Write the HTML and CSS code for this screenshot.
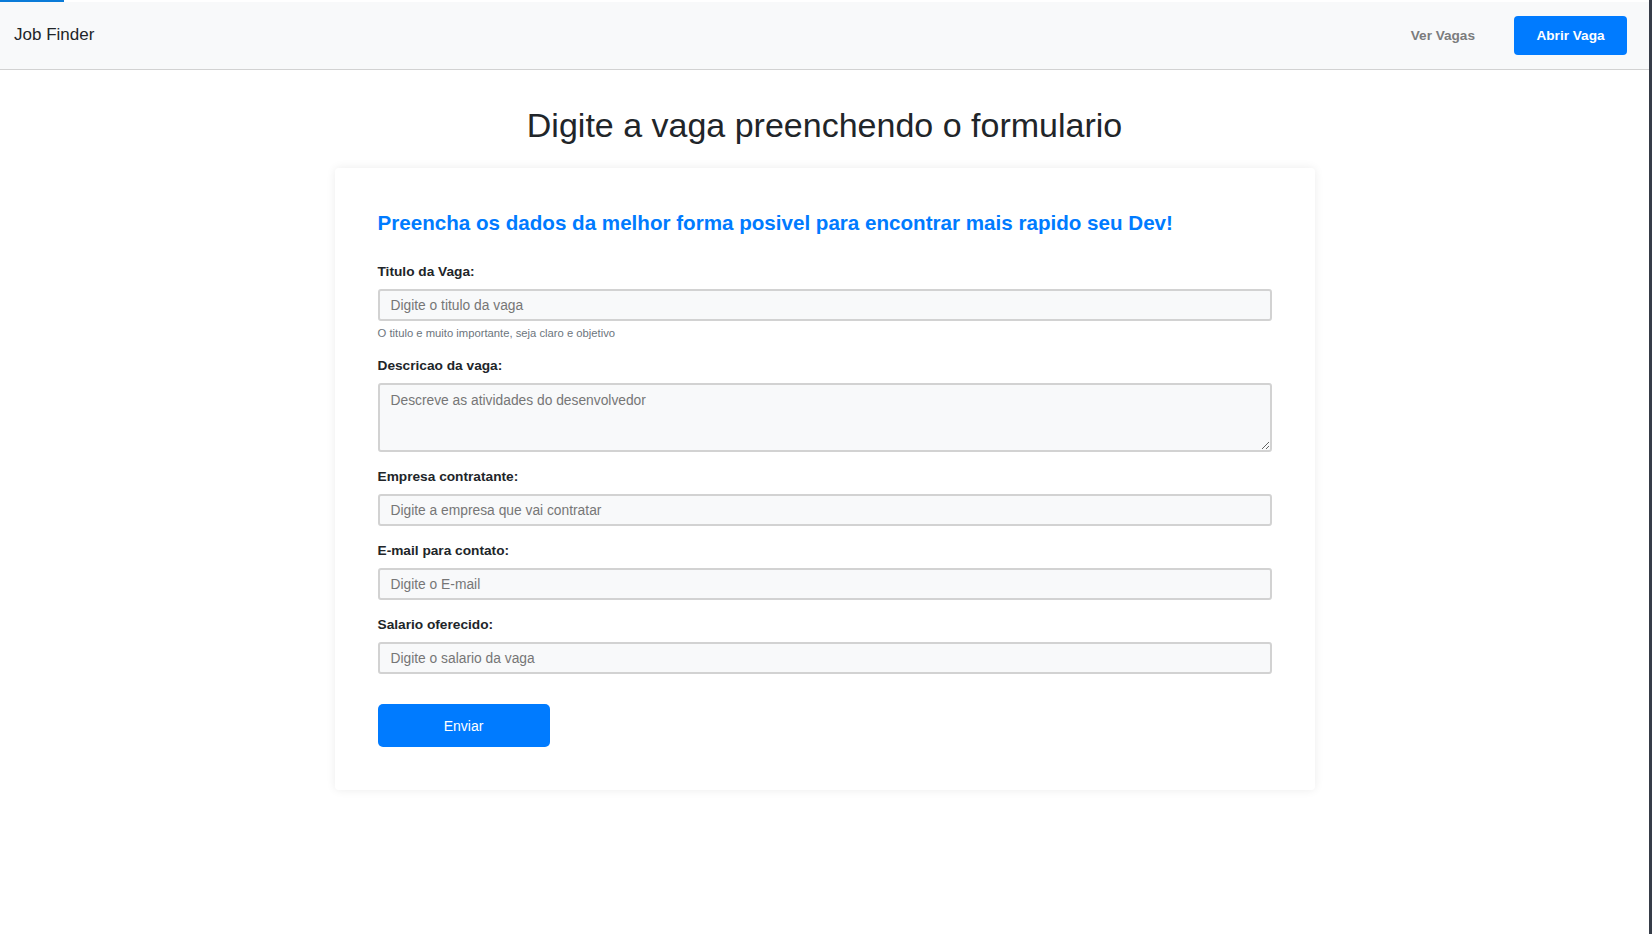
FILE: index.html
```html
<!DOCTYPE html>
<html lang="pt-BR">
<head>
<meta charset="utf-8">
<title>Job Finder</title>
<link rel="stylesheet" href="styles.css">
</head>
<body>
<div class="page">
  <div class="progress"><span class="progress-fill"></span></div>
  <nav class="navbar">
    <a class="brand" href="#">Job Finder</a>
    <div class="nav-right">
      <a class="nav-link" href="#">Ver Vagas</a>
      <a class="nav-btn" href="#">Abrir Vaga</a>
    </div>
  </nav>
  <main class="content">
    <h1 class="title">Digite a vaga preenchendo o formulario</h1>
    <form class="card">
      <h2 class="card-title">Preencha os dados da melhor forma posivel para encontrar mais rapido seu Dev!</h2>
      <div class="group">
        <label class="label">Titulo da Vaga:</label>
        <input class="field" type="text" placeholder="Digite o titulo da vaga">
        <small class="help">O titulo e muito importante, seja claro e objetivo</small>
      </div>
      <div class="group">
        <label class="label">Descricao da vaga:</label>
        <textarea class="field area" placeholder="Descreve as atividades do desenvolvedor"></textarea>
      </div>
      <div class="group">
        <label class="label">Empresa contratante:</label>
        <input class="field" type="text" placeholder="Digite a empresa que vai contratar">
      </div>
      <div class="group">
        <label class="label">E-mail para contato:</label>
        <input class="field" type="text" placeholder="Digite o E-mail">
      </div>
      <div class="group">
        <label class="label">Salario oferecido:</label>
        <input class="field" type="text" placeholder="Digite o salario da vaga">
      </div>
      <button class="submit" type="button">Enviar</button>
    </form>
  </main>
</div>
<div class="edge"></div>
</body>
</html>
```
FILE: styles.css
```css
html, body {
  margin: 0;
  padding: 0;
  height: 100%;
}
body {
  display: flex;
  font-family: "Liberation Sans", Arial, sans-serif;
  color: #212529;
  background: #fff;
}
.page {
  flex: 1;
  min-width: 0;
}
.edge {
  width: 3px;
  flex: 0 0 3px;
  background: #363c48;
}
.progress {
  height: 2px;
  background: #fff;
}
.progress-fill {
  display: block;
  width: 64px;
  height: 2px;
  background: #0a7bd8;
}
.navbar {
  height: 67px;
  background: #f8f9fa;
  border-bottom: 1px solid #d2d2d2;
  display: flex;
  align-items: center;
  justify-content: space-between;
  padding: 0 22px 0 14px;
}
.brand {
  font-size: 17px;
  color: #212529;
  text-decoration: none;
  margin-top: -1px;
}
.nav-right {
  display: flex;
  align-items: center;
  gap: 39px;
}
.nav-link {
  font-size: 13.6px;
  font-weight: bold;
  color: #7b7c7d;
  text-decoration: none;
}
.nav-btn {
  display: flex;
  align-items: center;
  justify-content: center;
  width: 113px;
  height: 39px;
  box-sizing: border-box;
  background: #007bff;
  color: #fff;
  font-size: 13.6px;
  font-weight: bold;
  text-decoration: none;
  border-radius: 4px;
}
.content {
  display: flex;
  flex-direction: column;
  align-items: center;
  padding-top: 36px;
}
.title {
  margin: 0 0 24px;
  font-size: 34px;
  font-weight: normal;
  line-height: 38px;
  color: #212529;
}
.card {
  width: 980px;
  box-sizing: border-box;
  padding: 43px;
  background: #fff;
  border-radius: 4px;
  box-shadow: 0 0 10px rgba(0, 0, 0, 0.08);
  display: flex;
  flex-direction: column;
  align-items: flex-start;
}
.card-title {
  margin: 0 0 28px;
  font-size: 20.6px;
  line-height: 24px;
  font-weight: bold;
  color: #007bff;
}
.group {
  display: flex;
  flex-direction: column;
  align-self: stretch;
  margin-bottom: 16px;
}
.label {
  font-size: 13.7px;
  line-height: 17px;
  font-weight: bold;
  margin-bottom: 9px;
  color: #212529;
}
.field {
  display: block;
  height: 32px;
  box-sizing: border-box;
  margin: 0;
  padding: 0 11px;
  border: 2px solid #d2d2d2;
  border-radius: 3px;
  background: #f8f9fa;
  font-family: "Liberation Sans", Arial, sans-serif;
  font-size: 13.8px;
  color: #495057;
}
.field::placeholder {
  color: #767676;
  opacity: 1;
}
.area {
  height: 69px;
  padding: 8px 11px;
  resize: vertical;
}
.help {
  margin-top: 4px;
  font-size: 11.25px;
  line-height: 16px;
  color: #6c757d;
}
.submit {
  margin-top: 14px;
  width: 172px;
  height: 43px;
  border: none;
  border-radius: 5px;
  background: #007bff;
  color: #fff;
  font-family: "Liberation Sans", Arial, sans-serif;
  font-size: 14px;
}
```
